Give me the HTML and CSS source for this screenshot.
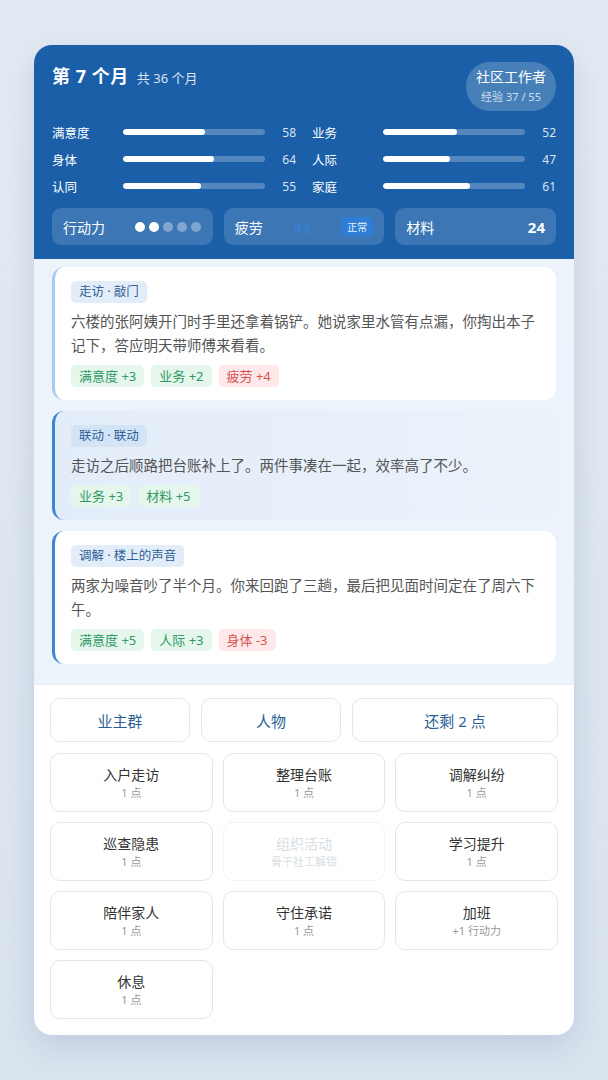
FILE: index.html
```html
<!DOCTYPE html>
<html lang="zh-CN">
<head>
    <meta charset="UTF-8">
    <meta name="viewport" content="width=device-width, initial-scale=1.0">
    <title>社区工作者</title>
    <link rel="stylesheet" href="styles.css">
</head>
<body>
    <div class="app">
        <header class="topo">
            <div class="topo-linha">
                <div class="mes">
                    <span class="mes-atual">第 7 个月</span>
                    <span class="mes-total">共 36 个月</span>
                </div>
                <div class="cargo">
                    <div class="cargo-nome">社区工作者</div>
                    <div class="cargo-xp">经验 37 / 55</div>
                </div>
            </div>

            <div class="stats">
                <div class="stat"><span class="stat-nome">满意度</span><span class="barra"><i style="width: 58%"></i></span><span class="stat-valor">58</span></div>
                <div class="stat"><span class="stat-nome">业务</span><span class="barra"><i style="width: 52%"></i></span><span class="stat-valor">52</span></div>
                <div class="stat"><span class="stat-nome">身体</span><span class="barra"><i style="width: 64%"></i></span><span class="stat-valor">64</span></div>
                <div class="stat"><span class="stat-nome">人际</span><span class="barra"><i style="width: 47%"></i></span><span class="stat-valor">47</span></div>
                <div class="stat"><span class="stat-nome">认同</span><span class="barra"><i style="width: 55%"></i></span><span class="stat-valor">55</span></div>
                <div class="stat"><span class="stat-nome">家庭</span><span class="barra"><i style="width: 61%"></i></span><span class="stat-valor">61</span></div>
            </div>

            <div class="caixas">
                <div class="caixa">
                    <span>行动力</span>
                    <span class="pontos"><i class="cheio"></i><i class="cheio"></i><i></i><i></i><i></i></span>
                </div>
                <div class="caixa">
                    <span>疲劳</span>
                    <span class="fadiga">42</span>
                    <span class="estado">正常</span>
                </div>
                <div class="caixa">
                    <span>材料</span>
                    <span class="material">24</span>
                </div>
            </div>
        </header>

        <section class="registro">
            <div class="evento evento-antigo">
                <span class="etiqueta">走访 · 敲门</span>
                <p>六楼的张阿姨开门时手里还拿着锅铲。她说家里水管有点漏，你掏出本子记下，答应明天带师傅来看看。</p>
                <div class="efeitos">
                    <span class="efeito bom">满意度 +3</span>
                    <span class="efeito bom">业务 +2</span>
                    <span class="efeito ruim">疲劳 +4</span>
                </div>
            </div>
            <div class="evento evento-combo">
                <span class="etiqueta">联动 · 联动</span>
                <p>走访之后顺路把台账补上了。两件事凑在一起，效率高了不少。</p>
                <div class="efeitos">
                    <span class="efeito bom">业务 +3</span>
                    <span class="efeito bom">材料 +5</span>
                </div>
            </div>
            <div class="evento">
                <span class="etiqueta">调解 · 楼上的声音</span>
                <p>两家为噪音吵了半个月。你来回跑了三趟，最后把见面时间定在了周六下午。</p>
                <div class="efeitos">
                    <span class="efeito bom">满意度 +5</span>
                    <span class="efeito bom">人际 +3</span>
                    <span class="efeito ruim">身体 -3</span>
                </div>
            </div>
        </section>

        <section class="acoes">
            <div class="abas">
                <button class="aba">业主群</button>
                <button class="aba">人物</button>
                <button class="aba">还剩 2 点</button>
            </div>
            <div class="grade">
                <button class="acao"><b>入户走访</b><small>1 点</small></button>
                <button class="acao"><b>整理台账</b><small>1 点</small></button>
                <button class="acao"><b>调解纠纷</b><small>1 点</small></button>
                <button class="acao"><b>巡查隐患</b><small>1 点</small></button>
                <button class="acao bloqueada"><b>组织活动</b><small>骨干社工解锁</small></button>
                <button class="acao"><b>学习提升</b><small>1 点</small></button>
                <button class="acao"><b>陪伴家人</b><small>1 点</small></button>
                <button class="acao"><b>守住承诺</b><small>1 点</small></button>
                <button class="acao"><b>加班</b><small>+1 行动力</small></button>
                <button class="acao"><b>休息</b><small>1 点</small></button>
            </div>
        </section>
    </div>
</body>
</html>
```

FILE: styles.css
```css
/* Base */
body {
    margin: 0;
    padding: 45px 34px;
    font-family: "Noto Sans", "Noto Sans CJK SC", sans-serif;
    background: linear-gradient(180deg, #e3eaf3 0%, #d9e3ee 100%);
    color: #333;
    min-height: 1080px;
    box-sizing: border-box;
}

.app {
    background: #ffffff;
    border-radius: 18px;
    overflow: hidden;
    box-shadow: 0 10px 30px rgba(30, 70, 120, 0.15);
}

/* Topo azul */
.topo {
    background: #1a5fa8;
    color: #fff;
    padding: 17px 18px 14px;
}

.topo-linha {
    display: flex;
    justify-content: space-between;
    align-items: flex-start;
}

.mes {
    padding-top: 0;
}

.mes-atual {
    font-size: 18px;
    font-weight: bold;
    letter-spacing: 0.5px;
}

.mes-total {
    font-size: 13px;
    margin-left: 4px;
    color: rgba(255, 255, 255, 0.85);
}

.cargo {
    background: rgba(255, 255, 255, 0.2);
    border-radius: 24px;
    padding: 4px 10px 5px;
    text-align: center;
}

.cargo-nome {
    font-size: 14px;
    line-height: 22px;
}

.cargo-xp {
    font-size: 11px;
    line-height: 18px;
    color: rgba(255, 255, 255, 0.75);
}

.stats {
    display: grid;
    grid-template-columns: 1fr 1fr;
    column-gap: 16px;
    row-gap: 5px;
    margin-top: 10px;
}

.stat {
    display: flex;
    align-items: center;
    height: 22px;
    font-size: 12.5px;
}

.stat-nome {
    width: 71px;
}

.barra {
    width: 142px;
    height: 6px;
    border-radius: 3px;
    background: rgba(255, 255, 255, 0.25);
    overflow: hidden;
}

.barra i {
    display: block;
    height: 100%;
    background: #fff;
    border-radius: 3px;
}

.stat-valor {
    flex: 1;
    text-align: right;
    font-size: 12px;
    color: rgba(255, 255, 255, 0.85);
}

.caixas {
    display: grid;
    grid-template-columns: repeat(3, 1fr);
    gap: 11px;
    margin-top: 11px;
}

.caixa {
    display: flex;
    align-items: center;
    justify-content: space-between;
    height: 37px;
    padding: 0 11px;
    border-radius: 9px;
    background: rgba(255, 255, 255, 0.15);
    font-size: 14px;
}

.pontos {
    display: flex;
    gap: 4px;
    margin-right: 1px;
}

.pontos i {
    width: 10px;
    height: 10px;
    border-radius: 50%;
    background: rgba(255, 255, 255, 0.35);
}

.pontos i.cheio {
    background: #fff;
}

.fadiga {
    font-size: 15px;
    font-weight: bold;
    color: #3a7fcc;
}

.estado {
    font-size: 10px;
    background: #2f7dd6;
    color: #e8f1fc;
    border-radius: 4px;
    padding: 2px 6px;
}

.material {
    font-size: 15px;
    font-weight: bold;
}

/* Registro de eventos */
.registro {
    background: #edf3fa;
    padding: 8px 18px 20px;
    display: flex;
    flex-direction: column;
    gap: 11px;
}

.evento {
    background: #fff;
    border-left: 3px solid #3a86d4;
    border-radius: 12px;
    padding: 12px 16px 13px 16px;
}

.evento-antigo {
    border-left-color: #a9cbee;
}

.evento-combo {
    background: linear-gradient(90deg, #e3edf9 0%, #ebf2fa 100%);
}

.etiqueta {
    display: inline-block;
    font-size: 12.5px;
    line-height: 22px;
    padding: 0 8px;
    border-radius: 5px;
    background: #e3edf9;
    color: #2d5f97;
}

.evento-combo .etiqueta {
    background: #d3e4f7;
}

.evento p {
    margin: 6px 0 8px;
    font-size: 14.5px;
    line-height: 24px;
    color: #555;
}

.efeitos {
    display: flex;
    gap: 7px;
}

.efeito {
    font-size: 13px;
    line-height: 22px;
    padding: 0 8px;
    border-radius: 5px;
}

.bom {
    background: #e5f6ed;
    color: #2f9a62;
}

.ruim {
    background: #fde9e9;
    color: #d9534f;
}

/* Ações */
.acoes {
    border-top: 1px solid #e8edf3;
    padding: 13px 16px 16px;
}

.abas {
    display: grid;
    grid-template-columns: 140px 140px 1fr;
    gap: 11px;
}

.aba {
    height: 44px;
    border: 1px solid #e3e6ea;
    border-radius: 10px;
    background: #fff;
    color: #2d5f97;
    font-family: inherit;
    font-size: 15px;
}

.grade {
    display: grid;
    grid-template-columns: repeat(3, 1fr);
    gap: 10px;
    margin-top: 11px;
}

.acao {
    height: 59px;
    border: 1px solid #e3e6ea;
    border-radius: 10px;
    background: #fff;
    font-family: inherit;
    display: flex;
    flex-direction: column;
    align-items: center;
    justify-content: center;
    padding: 0;
}

.acao b {
    font-weight: normal;
    font-size: 14px;
    line-height: 20px;
    color: #333;
}

.acao small {
    font-size: 11px;
    line-height: 16px;
    color: #999;
}

.acao.bloqueada {
    border-color: #f1f3f5;
}

.acao.bloqueada b,
.acao.bloqueada small {
    color: #d8dde3;
}
```
